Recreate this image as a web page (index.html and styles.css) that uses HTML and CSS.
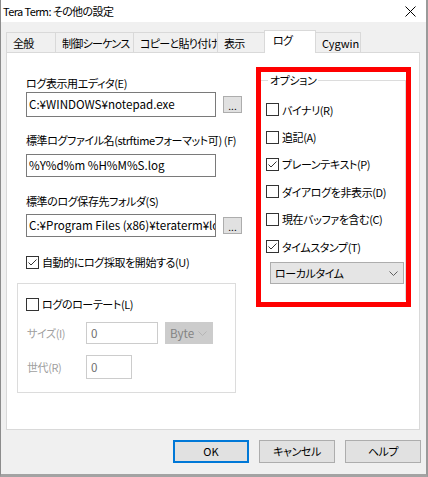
FILE: index.html
```html
<!DOCTYPE html>
<html>
<head>
    <meta charset="utf-8">
    <title>Tera Term: その他の設定</title>
    <link rel="stylesheet" href="styles.css">
</head>
<body>
<div class="window">
    <div class="titlebar">
        <span class="title">Tera Term: その他の設定</span>
        <svg class="close" width="11" height="11" viewBox="0 0 11 11"><path d="M0.5 0.5 L10.5 10.5 M10.5 0.5 L0.5 10.5" stroke="#000" stroke-width="1" fill="none"/></svg>
    </div>

    <div class="tabs">
        <div class="tab t1">全般</div>
        <div class="tab t2">制御シーケンス</div>
        <div class="tab t3">コピーと貼り付け</div>
        <div class="tab t4">表示</div>
        <div class="tab t5 active">ログ</div>
        <div class="tab t6">Cygwin</div>
    </div>

    <div class="panel">
        <div class="left">
            <div class="label l1">ログ表示用エディタ(E)</div>
            <div class="editrow r1">
                <div class="edit tall">C:¥WINDOWS¥notepad.exe</div>
                <div class="browse">...</div>
            </div>
            <div class="label l2">標準ログファイル名(strftimeフォーマット可) (F)</div>
            <div class="editrow r2">
                <div class="edit">%Y%d%m %H%M%S.log</div>
            </div>
            <div class="label l3">標準のログ保存先フォルダ(S)</div>
            <div class="editrow r3">
                <div class="edit">C:¥Program Files (x86)¥teraterm¥log</div>
                <div class="browse">...</div>
            </div>
            <div class="check auto"><span class="box checked"></span>自動的にログ採取を開始する(U)</div>

            <div class="rotate">
                <div class="check rot"><span class="box"></span>ログのローテート(L)</div>
                <div class="row size">
                    <span class="dim">サイズ(I)</span>
                    <div class="edit off w72">0</div>
                    <div class="combo off">Byte
                        <svg width="9" height="5" viewBox="0 0 9 5"><path d="M0.5 0.5 L4.5 4.5 L8.5 0.5" stroke="#b5b5b5" fill="none"/></svg>
                    </div>
                </div>
                <div class="row gen">
                    <span class="dim">世代(R)</span>
                    <div class="edit off w46">0</div>
                </div>
            </div>
        </div>

        <div class="mark">
            <fieldset class="options">
                <legend>オプション</legend>
                <div class="check opt"><span class="box"></span>バイナリ(R)</div>
                <div class="check opt"><span class="box"></span>追記(A)</div>
                <div class="check opt"><span class="box checked"></span>プレーンテキスト(P)</div>
                <div class="check opt"><span class="box"></span>ダイアログを非表示(D)</div>
                <div class="check opt"><span class="box"></span>現在バッファを含む(C)</div>
                <div class="check opt"><span class="box checked"></span>タイムスタンプ(T)</div>
                <div class="combo zone">ローカルタイム
                    <svg width="9" height="5" viewBox="0 0 9 5"><path d="M0.5 0.5 L4.5 4.5 L8.5 0.5" stroke="#606060" fill="none"/></svg>
                </div>
            </fieldset>
        </div>
    </div>

    <div class="buttons">
        <div class="button default">OK</div>
        <div class="button">キャンセル</div>
        <div class="button">ヘルプ</div>
    </div>
</div>
</body>
</html>
```

FILE: styles.css
```css
html, body {
    margin: 0;
    padding: 0;
}
body {
    font-family: "Noto Sans CJK JP", sans-serif;
    font-size: 11px;
    font-feature-settings: "palt" 1;
    letter-spacing: -0.4px;
    color: #000;
    background: #fff;
}
.window {
    width: 428px;
    height: 477px;
    box-sizing: border-box;
    background: #f0f0f0;
    border-left: 1px solid #8c8c8c;
    border-right: 2px solid #9a9a9a;
    border-bottom: 3px solid #a3a3a3;
}

/* title bar */
.titlebar {
    height: 22px;
    background: #fff;
    display: flex;
    align-items: center;
    justify-content: space-between;
}
.title {
    margin-left: 2px;
    line-height: 16px;
    letter-spacing: -0.6px;
}
.close {
    margin-right: 10px;
}

/* tabs */
.tabs {
    display: flex;
    align-items: flex-end;
    height: 22px;
    margin-top: 8px;
    margin-left: 5px;
}
.tab {
    height: 20px;
    box-sizing: border-box;
    border: 1px solid #d9d9d9;
    border-bottom: none;
    margin-right: -1px;
    padding-left: 6px;
    line-height: 21px;
    background: #f0f0f0;
    white-space: nowrap;
    overflow: hidden;
    letter-spacing: -0.7px;
}
.t1 { width: 50px; }
.t2 { width: 79px; }
.t3 { width: 85px; }
.t4 { width: 48px; }
.t5 { width: 52px; }
.t6 { width: 46px; letter-spacing: 0; }
.tab.active {
    height: 23px;
    margin-bottom: -1px;
    background: #fff;
    position: relative;
    z-index: 1;
    padding-left: 8px;
    line-height: 19px;
}

/* page */
.panel {
    margin-left: 5px;
    width: 414px;
    height: 378px;
    box-sizing: border-box;
    border: 1px solid #d9d9d9;
    background: #fff;
    display: flex;
}
.left {
    margin-left: 10px;
    width: 225px;
    flex: none;
}
.label {
    line-height: 16px;
    padding-left: 9px;
    white-space: nowrap;
}
.l1 { margin-top: 22px; }
.l2 { margin-top: 15px; }
.l3 { margin-top: 16px; }
.editrow {
    display: flex;
    align-items: center;
    padding-left: 9px;
}
.r1 { margin-top: 1px; }
.r2 { margin-top: 6px; }
.r3 { margin-top: 5px; }
.edit {
    width: 190px;
    height: 23px;
    box-sizing: border-box;
    border: 1px solid #7a7a7a;
    background: #fff;
    padding-left: 2px;
    font-size: 11.6px;
    letter-spacing: 0;
    line-height: 21px;
    white-space: nowrap;
    overflow: hidden;
    flex: none;
}
.edit.tall {
    height: 25px;
    line-height: 23px;
}
.browse {
    width: 19px;
    height: 17px;
    box-sizing: border-box;
    margin-left: 7px;
    border: 1px solid #adadad;
    background: #e1e1e1;
    font-size: 10px;
    letter-spacing: 0;
    line-height: 17px;
    text-align: center;
    flex: none;
}

/* check boxes */
.check {
    display: flex;
    align-items: center;
    height: 16px;
    line-height: 16px;
    white-space: nowrap;
}
.box {
    width: 13px;
    height: 13px;
    box-sizing: border-box;
    border: 1px solid #333;
    background: #fff;
    margin-right: 3px;
    flex: none;
}
.box.checked {
    background: #fff url("data:image/svg+xml,%3Csvg xmlns='http://www.w3.org/2000/svg' width='11' height='11'%3E%3Cpath d='M1.5 5.5 L4 8 L9.5 2.5' stroke='%23333' stroke-width='1' fill='none'/%3E%3C/svg%3E") no-repeat center;
}
.auto {
    margin-top: 17px;
    padding-left: 9px;
}

/* rotation group */
.rotate {
    margin-top: 13px;
    width: 219px;
    height: 110px;
    box-sizing: border-box;
    border: 1px solid #dcdcdc;
}
.rot {
    margin-top: 12px;
    padding-left: 8px;
}
.row {
    display: flex;
    align-items: center;
    padding-left: 9px;
}
.size { margin-top: 10px; }
.gen { margin-top: 11px; }
.dim {
    width: 59px;
    color: #a0a0a0;
    flex: none;
}
.edit.off {
    border-color: #cccccc;
    color: #6d6d6d;
    padding-left: 4px;
}
.w72 { width: 72px; height: 22px; line-height: 20px; }
.w46 { width: 46px; height: 24px; line-height: 22px; }
.combo {
    height: 22px;
    box-sizing: border-box;
    border: 1px solid #adadad;
    background: #e5e5e5;
    display: flex;
    align-items: center;
    justify-content: space-between;
    padding: 0 5px 0 4px;
}
.combo.off {
    width: 48px;
    margin-left: 7px;
    background: #cccccc;
    border-color: #cccccc;
    color: #838383;
    font-size: 11.6px;
    letter-spacing: 0;
}

/* highlighted options block */
.mark {
    margin-left: 14px;
    margin-top: 14px;
    width: 155px;
    height: 240px;
    box-sizing: border-box;
    border: 5px solid #ff0000;
    flex: none;
}
.options {
    margin: 0;
    padding: 0 0 0 5px;
    border: 1px solid #dcdcdc;
    border-left: none;
    border-bottom: none;
    height: 228px;
    box-sizing: border-box;
    min-width: 0;
}
.options legend {
    padding: 0 2px;
    margin-left: 2px;
    line-height: 16px;
}
.opt {
    height: 27.4px;
}
.opt:first-of-type {
    margin-top: 8px;
}
.zone {
    width: 134px;
    margin-left: 4px;
    margin-top: 2px;
}

/* dialog buttons */
.buttons {
    display: flex;
    justify-content: flex-end;
    gap: 10px;
    margin-top: 10px;
    margin-right: 5px;
}
.button {
    width: 76px;
    height: 23px;
    box-sizing: border-box;
    border: 1px solid #adadad;
    background: #e1e1e1;
    text-align: center;
    line-height: 21px;
}
.button.default {
    border: 2px solid #0078d7;
    line-height: 19px;
    letter-spacing: 0;
}
```
